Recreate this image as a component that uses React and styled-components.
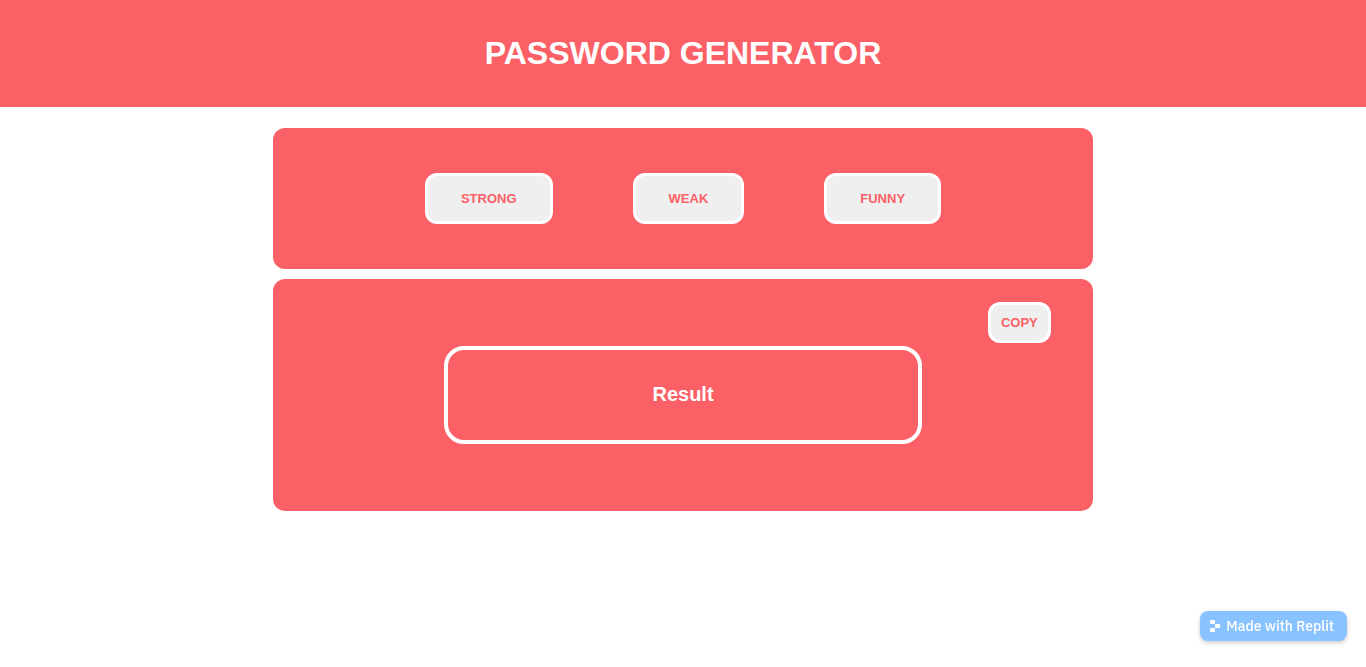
import React, { useState } from "react";
import styled, { createGlobalStyle } from "styled-components";

const GlobalStyle = createGlobalStyle`
  * { box-sizing: border-box; }
  body {
    margin: 0;
    background: #ffffff;
    font-family: "Liberation Sans", Arial, sans-serif;
  }
`;

const coral = "#fb6067";

const Header = styled.header`
  display: flex;
  justify-content: center;
  padding: 33px 16px 34px;
  background: ${coral};
`;

const Title = styled.h1`
  margin: 0;
  color: #ffffff;
  font-size: 32px;
  line-height: 40px;
  text-align: center;
`;

const Main = styled.main`
  display: flex;
  flex-direction: column;
  gap: 10px;
  width: 60%;
  margin: 21px auto 0;
`;

const Panel = styled.section`
  border-radius: 12px;
  background: ${coral};
`;

const Choices = styled(Panel)`
  display: flex;
  flex-wrap: wrap;
  justify-content: center;
  gap: 16px 80px;
  padding: 45px 16px;
`;

const Output = styled(Panel)`
  display: flex;
  flex-direction: column;
  align-items: center;
  padding: 23px 42px 67px;
`;

const Button = styled.button`
  padding: ${(p) => (p.$compact ? "10px" : "15px 33px")};
  border: 3px solid #ffffff;
  border-radius: 12px;
  background: #efefef;
  color: ${coral};
  font-family: inherit;
  font-size: 13px;
  font-weight: 700;
  line-height: 15px;
  cursor: pointer;
`;

const CopyButton = styled(Button)`
  align-self: flex-end;
  margin-bottom: 3px;
`;

const Result = styled.h2`
  width: 65%;
  margin: 0;
  padding: 32px 16px 34px;
  border: 4px solid #ffffff;
  border-radius: 20px;
  color: #ffffff;
  font-size: 20px;
  line-height: 24px;
  text-align: center;
`;

const Badge = styled.a`
  position: fixed;
  right: 19px;
  bottom: 26px;
  display: flex;
  align-items: center;
  gap: 6px;
  padding: 5px 13px 5px 10px;
  border-radius: 8px;
  background: #89c3ff;
  box-shadow: 0 2px 4px rgba(0, 0, 0, 0.2);
  color: #ffffff;
  font-family: "IBM Plex Sans", Inter, sans-serif;
  font-size: 14px;
  font-weight: 500;
  line-height: 20px;
  text-decoration: none;
`;

const kinds = [
  { label: "STRONG", make: () => Math.random().toString(36).slice(2) + "#A9!" },
  { label: "WEAK", make: () => Math.random().toString(36).slice(2, 8) },
  { label: "FUNNY", make: () => "bananaPhone" + Math.floor(Math.random() * 100) },
];

export default function App() {
  const [result, setResult] = useState("Result");

  return (
    <>
      <GlobalStyle />
      <Header>
        <Title>PASSWORD GENERATOR</Title>
      </Header>
      <Main>
        <Choices>
          {kinds.map(({ label, make }) => (
            <Button key={label} type="button" onClick={() => setResult(make())}>
              {label}
            </Button>
          ))}
        </Choices>
        <Output>
          <CopyButton
            $compact
            type="button"
            onClick={() => navigator.clipboard?.writeText(result)}
          >
            COPY
          </CopyButton>
          <Result>{result}</Result>
        </Output>
      </Main>
      <Badge href="https://replit.com">
        <svg width="10" height="12" viewBox="0 0 10 12" fill="#ffffff" aria-hidden="true">
          <rect x="0" y="0" width="5" height="4" rx="0.7" />
          <rect x="5" y="4" width="5" height="4" rx="0.7" />
          <rect x="0" y="8" width="5" height="4" rx="0.7" />
        </svg>
        Made with Replit
      </Badge>
    </>
  );
}
